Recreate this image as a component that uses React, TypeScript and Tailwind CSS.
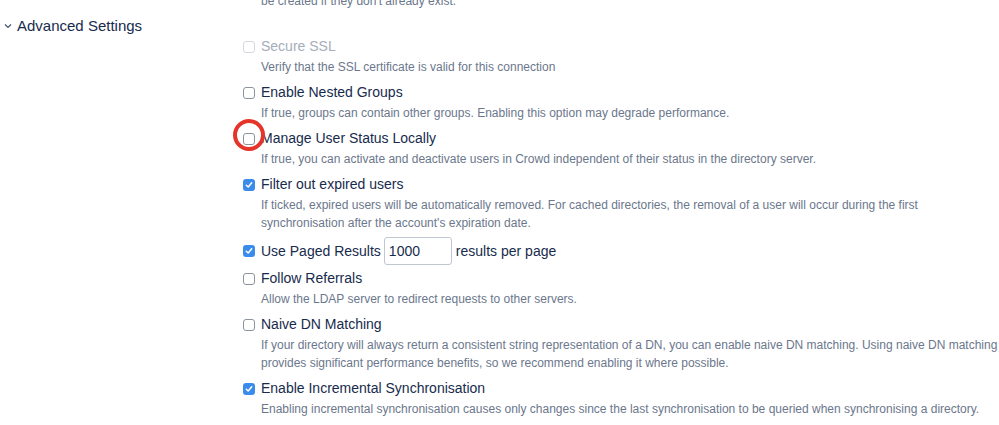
import React from 'react';

type Item = { label: string; desc?: string[]; checked?: boolean; disabled?: boolean; paged?: boolean; marked?: boolean };

const ITEMS: Item[] = [
  { label: 'Secure SSL', desc: ['Verify that the SSL certificate is valid for this connection'], disabled: true },
  { label: 'Enable Nested Groups', desc: ['If true, groups can contain other groups. Enabling this option may degrade performance.'] },
  { label: 'Manage User Status Locally', desc: ['If true, you can activate and deactivate users in Crowd independent of their status in the directory server.'], marked: true },
  { label: 'Filter out expired users', checked: true, desc: ["If ticked, expired users will be automatically removed. For cached directories, the removal of a user will occur during the first", "synchronisation after the account's expiration date."] },
  { label: 'Use Paged Results', checked: true, paged: true },
  { label: 'Follow Referrals', desc: ['Allow the LDAP server to redirect requests to other servers.'] },
  { label: 'Naive DN Matching', desc: ['If your directory will always return a consistent string representation of a DN, you can enable naive DN matching. Using naive DN matching', 'provides significant performance benefits, so we recommend enabling it where possible.'] },
  { label: 'Enable Incremental Synchronisation', checked: true, desc: ['Enabling incremental synchronisation causes only changes since the last synchronisation to be queried when synchronising a directory.'] },
];

function Box({ checked, disabled }: { checked?: boolean; disabled?: boolean }) {
  if (checked) {
    return (
      <span className="w-[12px] h-[12px] rounded-[3px] bg-[#3b8beb] flex items-center justify-center">
        <svg width="8" height="8" viewBox="0 0 8 8"><path d="M1.3 4.2 L3.2 6 L6.7 1.8" fill="none" stroke="#fff" strokeWidth="1.5" strokeLinecap="round" strokeLinejoin="round" /></svg>
      </span>
    );
  }
  return <span className={`w-[12px] h-[12px] rounded-[3px] border bg-white ${disabled ? 'border-[#d4d7dc]' : 'border-[#8d939c]'}`} />;
}

export default function App() {
  return (
    <div className="w-[999px] h-[425px] bg-white overflow-hidden text-[#172b4d]" style={{ fontFamily: '"Liberation Sans", Arial, sans-serif' }}>
      <div className="flex">
        <div className="w-[243px] pl-[4px] pt-[16px]">
          <div className="flex items-center gap-[5px] text-[15px] leading-[20px]">
            <svg width="8" height="6" viewBox="0 0 8 6"><path d="M1 1.5 L4 4.5 L7 1.5" fill="none" stroke="#42526e" strokeWidth="1.2" /></svg>
            <span>Advanced Settings</span>
          </div>
        </div>
        <div className="flex-1">
          <div className="text-[12px] leading-[18px] text-[#6b778c] mt-[-8px] pl-[18px]">be created if they don't already exist.</div>
          <div className="mt-[25px] flex flex-col">
            {ITEMS.map(it => (
              <div key={it.label} className="flex flex-col">
                <div className={`flex items-center ${it.paged ? 'h-[28px] mb-[2px]' : 'h-[23px]'}`}>
                  <div className="relative w-[18px] flex items-center">
                    <Box checked={it.checked} disabled={it.disabled} />
                    {it.marked && <span className="absolute left-[-10px] top-[-14px] w-[32px] h-[32px] rounded-full border-[4px] border-[#e5352a]" />}
                  </div>
                  <span className={`text-[14px] ${it.disabled ? 'text-[#a5adba]' : 'text-[#172b4d]'}`}>{it.label}</span>
                  {it.paged && (
                    <>
                      <span className="ml-[3px] w-[68px] h-[28px] border border-[#c1c7d0] rounded-[3px] text-[14px] leading-[26px] px-[4px]">1000</span>
                      <span className="ml-[4px] text-[14px]">results per page</span>
                    </>
                  )}
                </div>
                {it.desc && (
                  <div className="pl-[18px] mb-[5px] text-[12px] leading-[18px] text-[#6b778c]">
                    {it.desc.map(d => <div key={d}>{d}</div>)}
                  </div>
                )}
              </div>
            ))}
          </div>
        </div>
      </div>
    </div>
  );
}
